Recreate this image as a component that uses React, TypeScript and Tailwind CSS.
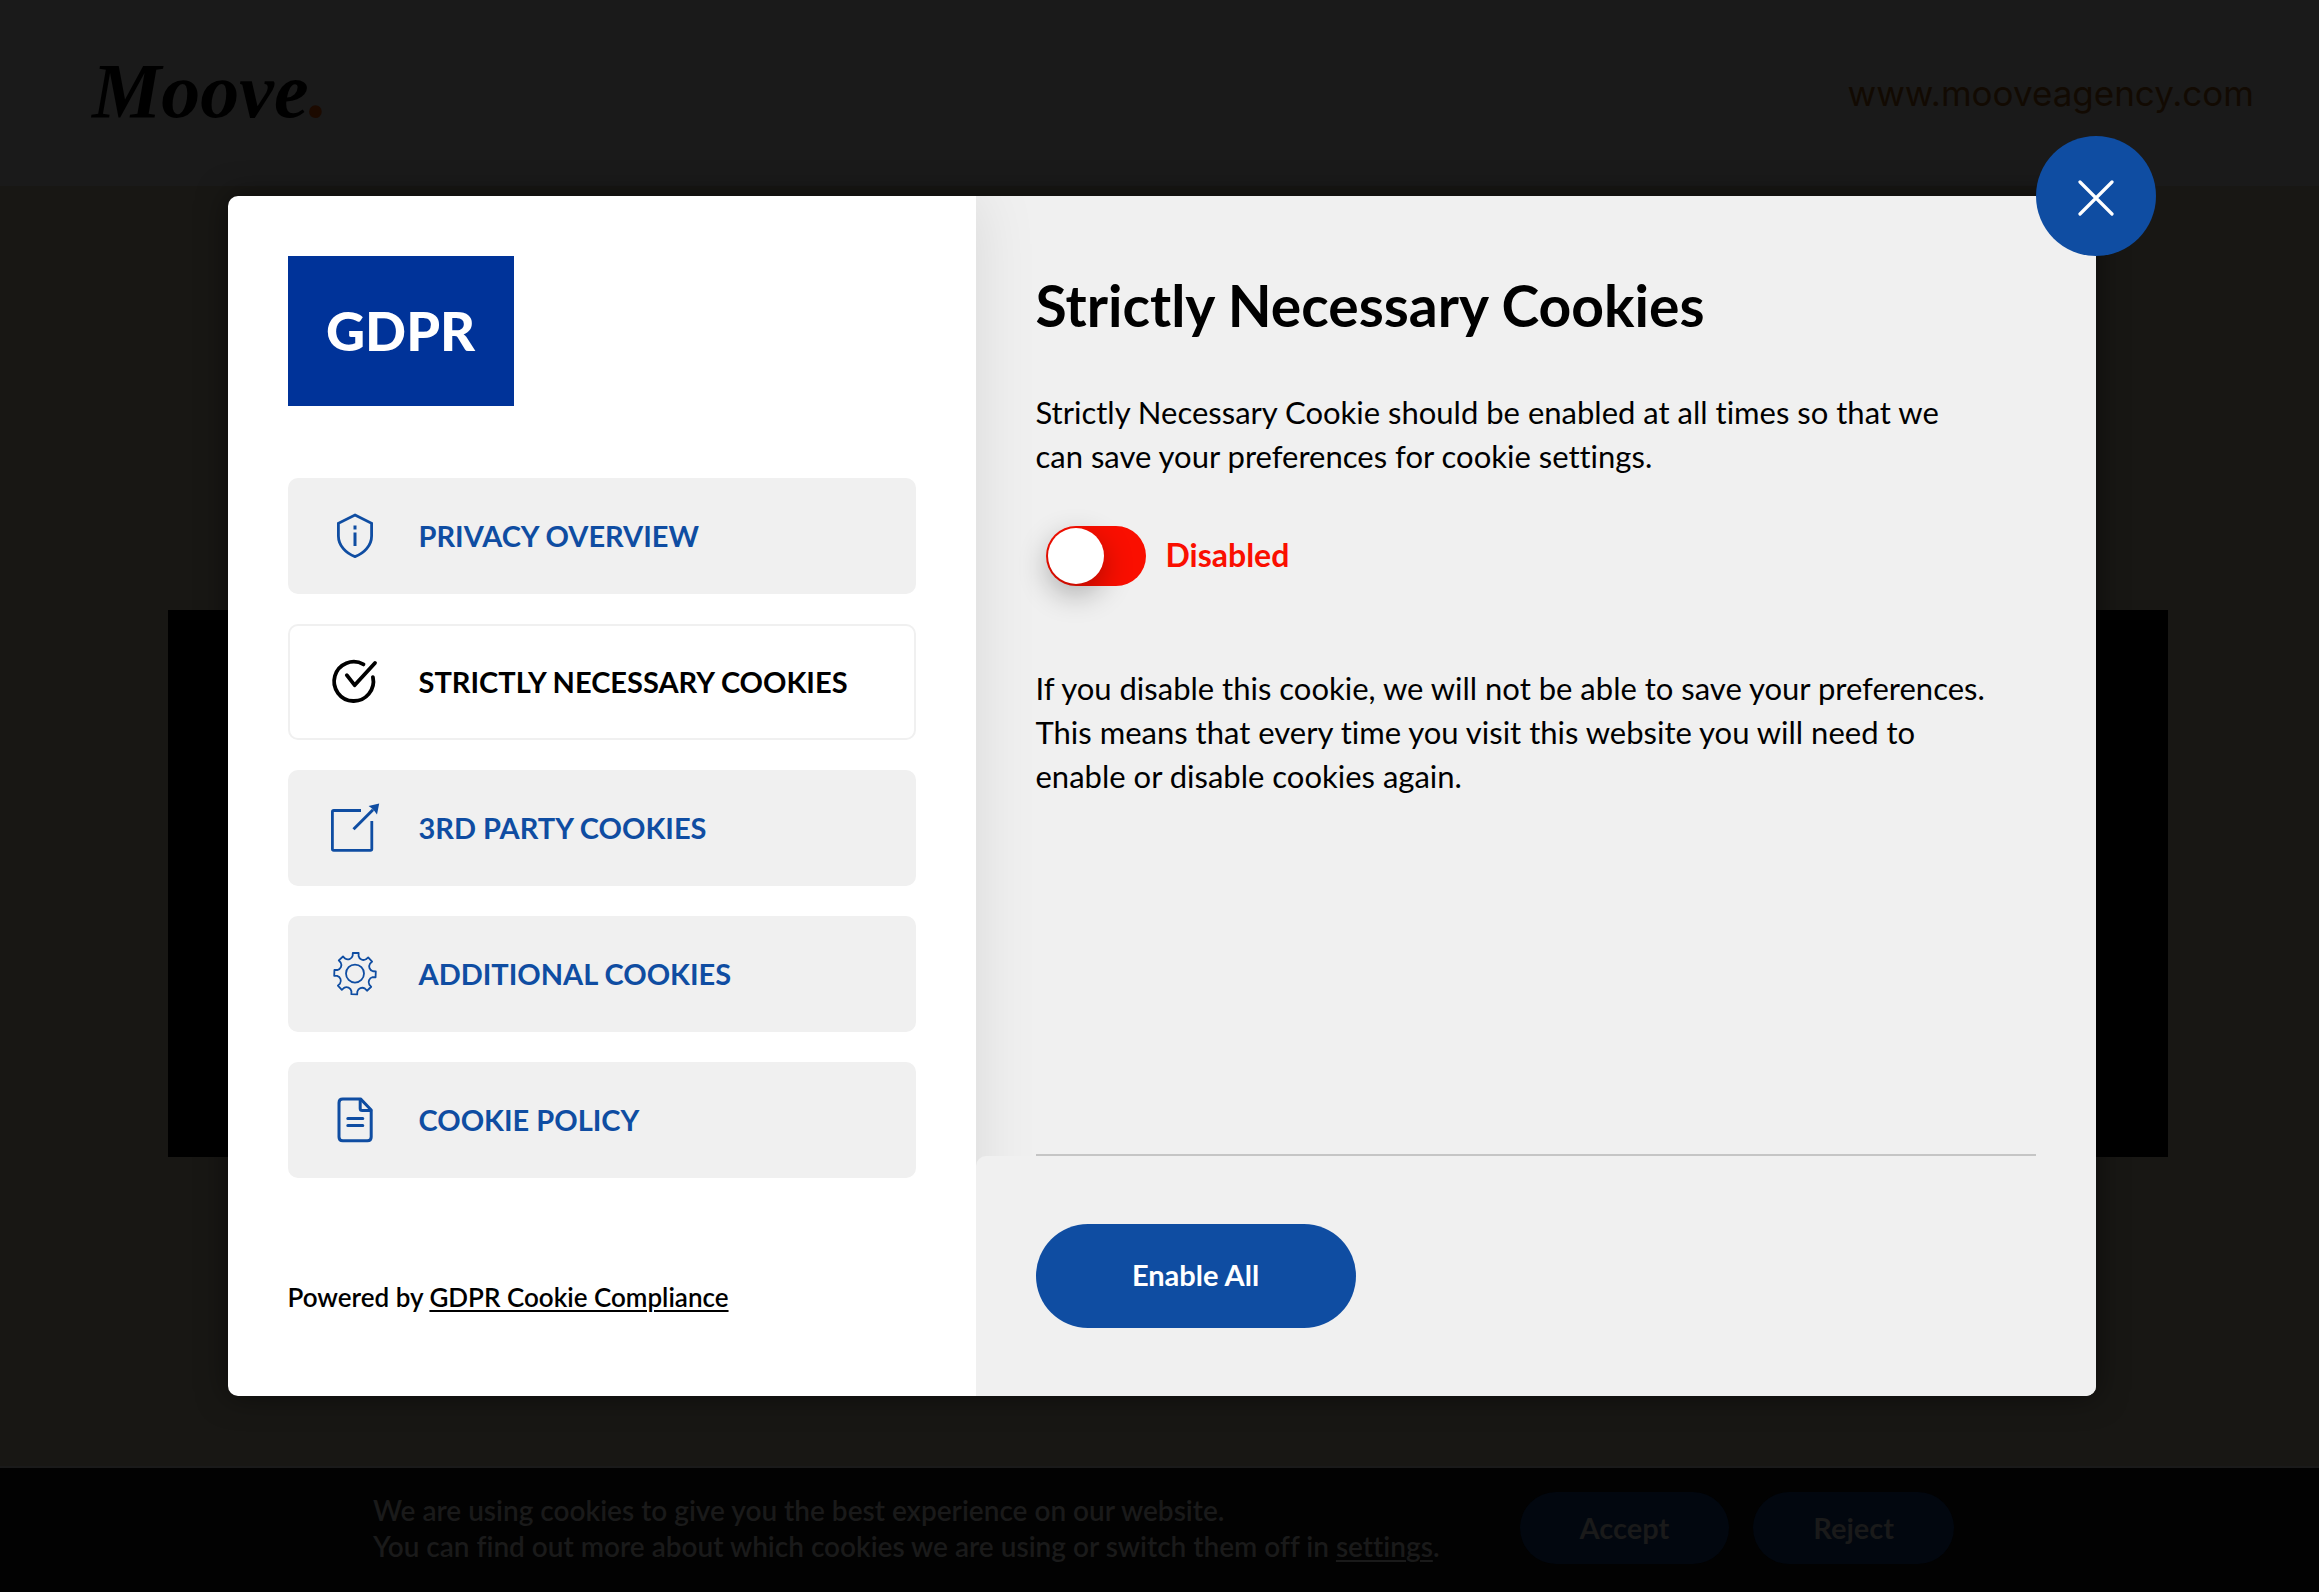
import { useState, type ReactNode } from "react";

function Icon({ children }: { children: ReactNode }) {
  return (
    <svg
      className="size-12 shrink-0 overflow-visible"
      viewBox="0 0 48 48"
      fill="none"
      stroke="currentColor"
      strokeWidth="3"
      strokeLinecap="round"
      strokeLinejoin="round"
      aria-hidden="true"
    >
      {children}
    </svg>
  );
}

function ShieldIcon() {
  return (
    <Icon>
      <path
        strokeWidth="2.8"
        strokeLinejoin="miter"
        d="M24 3 L40.6 11.3 V24 C40.6 33.5 33 41.5 24 44.6 C15 41.5 7.4 33.5 7.4 24 V11.3 Z"
      />
      <path strokeLinecap="butt" d="M24 13.5 V17.5 M24 20.5 V34" />
    </Icon>
  );
}

function CheckIcon() {
  return (
    <Icon>
      <path strokeWidth="3.8" d="M32.5 6.4 A19.6 19.6 0 1 0 41.9 19.2" />
      <path strokeWidth="3.8" d="M15.8 17.2 L23.6 27.2 L44 5" />
    </Icon>
  );
}

function ExternalIcon() {
  return (
    <Icon>
      <path
        strokeLinecap="butt"
        strokeWidth="2.8"
        d="M30 6.5 H2.8 Q1.4 6.5 1.4 7.9 V45 Q1.4 46.4 2.8 46.4 H39.4 Q40.8 46.4 40.8 45 V17"
      />
      <path strokeLinecap="butt" d="M22.5 25.2 L42 5.8" />
      <path stroke="none" fill="currentColor" d="M48.2 -0.4 L37.6 2 L41 4.6 L43.4 7 L46 10.6 Z" />
    </Icon>
  );
}

const gearPoint = (angle: number, radius: number) => {
  const a = ((angle - 88) * Math.PI) / 180;
  return `${(24 + radius * Math.cos(a)).toFixed(2)} ${(23.6 + radius * Math.sin(a)).toFixed(2)}`;
};

const gearPath =
  [0, 1, 2, 3, 4, 5, 6, 7]
    .map((k) => {
      const a = k * 45;
      return [
        `${k === 0 ? "M" : "A5 5 0 0 0"} ${gearPoint(a - 9.5, 18)}`,
        `L${gearPoint(a - 8, 20.9)}`,
        `L${gearPoint(a + 8, 20.9)}`,
        `L${gearPoint(a + 9.5, 18)}`,
      ].join(" ");
    })
    .join(" ") + ` A5 5 0 0 0 ${gearPoint(-9.5, 18)} Z`;

function GearIcon() {
  return (
    <Icon>
      <path strokeWidth="1.8" d={gearPath} />
      <circle strokeWidth="1.8" cx="24" cy="23.6" r="9" />
    </Icon>
  );
}

function DocumentIcon() {
  return (
    <Icon>
      <path d="M29.5 2.9 H11.8 Q8 2.9 8 6.7 V41 Q8 44.8 11.8 44.8 H36.4 Q40.2 44.8 40.2 41 V14 Z" />
      <path d="M29.2 3.4 V12.6 Q29.2 14.6 31.2 14.6 H39.8" />
      <path d="M16.8 22.4 H31.8 M16.8 29.6 H31.8" />
    </Icon>
  );
}

const tabs = [
  { label: "PRIVACY OVERVIEW", icon: <ShieldIcon /> },
  { label: "STRICTLY NECESSARY COOKIES", icon: <CheckIcon /> },
  { label: "3RD PARTY COOKIES", icon: <ExternalIcon /> },
  { label: "ADDITIONAL COOKIES", icon: <GearIcon /> },
  { label: "COOKIE POLICY", icon: <DocumentIcon /> },
];

function Sidebar() {
  const [active, setActive] = useState(1);
  return (
    <aside className="relative flex basis-[748px] flex-col bg-white px-[60px] pt-[60px] pb-20 shadow-[0_0_60px_rgba(0,0,0,0.1)]">
      <div className="flex h-[150px] w-[226px] items-center justify-center bg-[#003399] text-[54px] leading-none font-black text-white">
        GDPR
      </div>
      <nav className="mt-[72px] flex flex-col gap-[30px]">
        {tabs.map((tab, i) => (
          <button
            key={tab.label}
            type="button"
            onClick={() => setActive(i)}
            className={
              "flex h-[116px] items-center gap-10 rounded-[10px] border-2 border-[#f0f0f0] pl-[41px] text-left text-[29px] leading-none font-bold whitespace-nowrap " +
              (i === active ? "bg-white text-black" : "bg-[#f0f0f0] text-[#0f4da2]")
            }
          >
            {tab.icon}
            <span className="pb-0.5">{tab.label}</span>
          </button>
        ))}
      </nav>
      <p className="mt-[100px] text-[26px] leading-[38px] font-semibold text-black">
        Powered by{" "}
        <a href="#compliance" className="underline decoration-2 underline-offset-3">
          GDPR Cookie Compliance
        </a>
      </p>
    </aside>
  );
}

function Panel() {
  const [enabled, setEnabled] = useState(false);
  return (
    <section className="flex flex-1 flex-col bg-[#f0f0f0] text-black">
      <div className="flex flex-1 flex-col px-[60px] pt-[74px]">
        <h1 className="text-[57px] leading-[70px] font-bold">Strictly Necessary Cookies</h1>
        <p className="mt-[50px] text-[31px] leading-[44px]">
          Strictly Necessary Cookie should be enabled at all times so that we
          <br />
          can save your preferences for cookie settings.
        </p>
        <label className="mt-12 flex items-center gap-5 self-start pl-[10px] text-[32px] leading-none font-bold text-[#fa0f00]">
          <input
            type="checkbox"
            role="switch"
            checked={enabled}
            onChange={(e) => setEnabled(e.target.checked)}
            className="flex h-[60px] w-[100px] shrink-0 appearance-none items-center rounded-full bg-[#fa0f00] px-0.5 before:size-14 before:rounded-full before:bg-white before:shadow-[0_10px_30px_rgba(0,0,0,0.3)] checked:justify-end checked:bg-[#0f4da2]"
          />
          <span className="pb-0.5">{enabled ? "Enabled" : "Disabled"}</span>
        </label>
        <p className="mt-20 text-[31px] leading-[44px]">
          If you disable this cookie, we will not be able to save your preferences.
          <br />
          This means that every time you visit this website you will need to
          <br />
          enable or disable cookies again.
        </p>
        <div className="flex-1" />
        <hr className="border-t-2 border-[#c5c5c5]" />
      </div>
      <div className="relative rounded-tl-[10px] bg-[#f0f0f0] px-[60px] py-[68px]">
        <button
          type="button"
          onClick={() => setEnabled(true)}
          className="h-[104px] w-80 rounded-full bg-[#0f4da2] pb-1 text-[29px] leading-none font-bold text-white"
        >
          Enable All
        </button>
      </div>
    </section>
  );
}

export default function App() {
  return (
    <div className="relative flex min-h-screen flex-col bg-[#181714] font-['Lato',sans-serif] [font-variant-ligatures:none]">
      <header className="flex h-[186px] items-center justify-between bg-[#1a1a1a] pr-[65px] pl-[92px]">
        <div className="pb-1 font-['Liberation_Serif',serif] text-[78px] leading-none font-bold text-black italic">
          Moove<span className="text-[#1c0a00]">.</span>
        </div>
        <a href="#agency" className="font-['Inter',sans-serif] text-[35px] leading-none text-[#120a02]">
          www.mooveagency.com
        </a>
      </header>

      <main className="flex flex-1 justify-center pt-[424px] pb-[309px] pl-4">
        <div className="w-full max-w-[2000px] bg-black" />
      </main>

      <footer className="flex items-center justify-center gap-20 border-t-2 border-[#1a1a1a] bg-[#020202] pt-6 pb-7 pl-2 text-[28px] text-[#1a1a1a]">
        <p className="leading-9 font-semibold">
          We are using cookies to give you the best experience on our website.
          <br />
          You can find out more about which cookies we are using or switch them off in{" "}
          <a href="#settings" className="underline decoration-2 underline-offset-3">
            settings
          </a>
          .
        </p>
        <div className="flex gap-6 text-[29px] font-bold">
          <button type="button" className="h-[72px] rounded-full bg-[#02070f] px-[60px]">
            Accept
          </button>
          <button type="button" className="h-[72px] rounded-full bg-[#02070f] px-[60px]">
            Reject
          </button>
        </div>
      </footer>

      <div className="absolute inset-0 flex items-center justify-center pl-1">
        <div role="dialog" aria-modal="true" className="relative w-full max-w-[1868px]">
          <div className="flex overflow-hidden rounded-[10px] shadow-[0_0_30px_rgba(0,0,0,0.5)]">
            <Sidebar />
            <Panel />
          </div>
          <button
            type="button"
            aria-label="Close"
            className="absolute -top-[60px] -right-[60px] flex size-[120px] items-center justify-center rounded-full bg-[#0f4da2] text-white"
          >
            <svg
              className="size-10"
              viewBox="0 0 40 40"
              fill="none"
              stroke="currentColor"
              strokeWidth="3.2"
              strokeLinecap="round"
              aria-hidden="true"
            >
              <path d="M4 6 L36 38 M36 6 L4 38" />
            </svg>
          </button>
        </div>
      </div>
    </div>
  );
}
